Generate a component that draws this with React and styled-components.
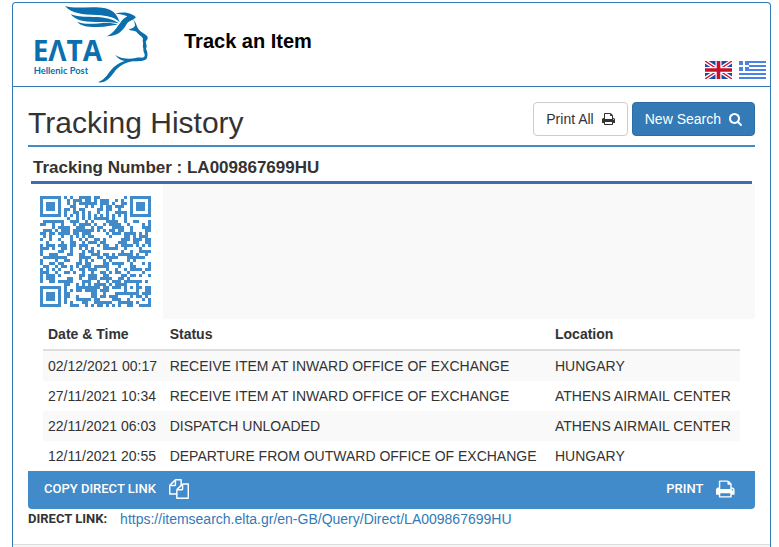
import styled, { createGlobalStyle } from 'styled-components';

const TRACKING_NUMBER = 'LA009867699HU';
const DIRECT_LINK = `https://itemsearch.elta.gr/en-GB/Query/Direct/${TRACKING_NUMBER}`;

const events = [
  {
    date: '02/12/2021 00:17',
    status: 'RECEIVE ITEM AT INWARD OFFICE OF EXCHANGE',
    location: 'HUNGARY',
  },
  {
    date: '27/11/2021 10:34',
    status: 'RECEIVE ITEM AT INWARD OFFICE OF EXCHANGE',
    location: 'ATHENS AIRMAIL CENTER',
  },
  {
    date: '22/11/2021 06:03',
    status: 'DISPATCH UNLOADED',
    location: 'ATHENS AIRMAIL CENTER',
  },
  {
    date: '12/11/2021 20:55',
    status: 'DEPARTURE FROM OUTWARD OFFICE OF EXCHANGE',
    location: 'HUNGARY',
  },
];

// QR version 5, error correction Q, mask 2
const QR_SIZE = 37;
const QR_BLOCKS = [15, 15, 16, 16];
const QR_EC_LENGTH = 18;
const QR_FORMAT = '011111100110001';

const gfMultiply = (x, y) => {
  let z = 0;
  for (let i = 7; i >= 0; i--) {
    z = (z << 1) ^ ((z >>> 7) * 0x11d);
    z ^= ((y >>> i) & 1) * x;
  }
  return z;
};

const makeDivisor = degree => {
  const result = Array(degree).fill(0);
  result[degree - 1] = 1;
  let root = 1;
  for (let i = 0; i < degree; i++) {
    for (let j = 0; j < degree; j++) {
      result[j] = gfMultiply(result[j], root);
      if (j + 1 < degree) result[j] ^= result[j + 1];
    }
    root = gfMultiply(root, 2);
  }
  return result;
};

const getRemainder = (data, divisor) => {
  const result = divisor.map(() => 0);
  data.forEach(byte => {
    const factor = byte ^ result.shift();
    result.push(0);
    divisor.forEach((value, i) => {
      result[i] ^= gfMultiply(value, factor);
    });
  });
  return result;
};

const toBits = (value, length) => value.toString(2).padStart(length, '0');

const getCodewordBits = text => {
  const total = QR_BLOCKS.reduce((a, b) => a + b, 0);
  let bits = '0100' + toBits(text.length, 8);
  [...text].forEach(char => {
    bits += toBits(char.charCodeAt(0), 8);
  });
  bits += '0000';
  const bytes = bits.match(/.{8}/g).map(byte => parseInt(byte, 2));
  for (let pad = 0xec; bytes.length < total; pad ^= 0xec ^ 0x11) {
    bytes.push(pad);
  }

  const divisor = makeDivisor(QR_EC_LENGTH);
  let start = 0;
  const blocks = QR_BLOCKS.map(length => {
    const block = bytes.slice(start, start + length);
    start += length;
    return block;
  });
  const ecBlocks = blocks.map(block => getRemainder(block, divisor));

  const result = [];
  for (let i = 0; i < 16; i++) {
    blocks.forEach(block => i < block.length && result.push(block[i]));
  }
  for (let i = 0; i < QR_EC_LENGTH; i++) {
    ecBlocks.forEach(block => result.push(block[i]));
  }
  return result.map(byte => toBits(byte, 8)).join('');
};

const getQrModules = text => {
  const grid = Array.from({ length: QR_SIZE }, () =>
    Array(QR_SIZE).fill(null)
  );
  const set = (x, y, dark) => {
    if (x >= 0 && y >= 0 && x < QR_SIZE && y < QR_SIZE) grid[y][x] = dark;
  };

  for (let i = 0; i < QR_SIZE; i++) {
    set(6, i, i % 2 === 0);
    set(i, 6, i % 2 === 0);
  }
  [
    [3, 3],
    [QR_SIZE - 4, 3],
    [3, QR_SIZE - 4],
  ].forEach(([cx, cy]) => {
    for (let dy = -4; dy <= 4; dy++) {
      for (let dx = -4; dx <= 4; dx++) {
        const distance = Math.max(Math.abs(dx), Math.abs(dy));
        set(cx + dx, cy + dy, distance !== 2 && distance !== 4);
      }
    }
  });
  for (let dy = -2; dy <= 2; dy++) {
    for (let dx = -2; dx <= 2; dx++) {
      set(30 + dx, 30 + dy, Math.max(Math.abs(dx), Math.abs(dy)) !== 1);
    }
  }

  const format = [...QR_FORMAT].reverse().map(bit => bit === '1');
  for (let i = 0; i < 6; i++) set(8, i, format[i]);
  set(8, 7, format[6]);
  set(8, 8, format[7]);
  set(7, 8, format[8]);
  for (let i = 9; i < 15; i++) set(14 - i, 8, format[i]);
  for (let i = 0; i < 8; i++) set(QR_SIZE - 1 - i, 8, format[i]);
  for (let i = 8; i < 15; i++) set(8, QR_SIZE - 15 + i, format[i]);
  set(8, QR_SIZE - 8, true);

  const bits = getCodewordBits(text);
  let index = 0;
  for (let right = QR_SIZE - 1; right >= 1; right -= 2) {
    if (right === 6) right = 5;
    for (let step = 0; step < QR_SIZE; step++) {
      const upward = ((right + 1) & 2) === 0;
      const y = upward ? QR_SIZE - 1 - step : step;
      for (let j = 0; j < 2; j++) {
        const x = right - j;
        if (grid[y][x] === null) {
          grid[y][x] = (bits[index] === '1') !== (x % 3 === 0);
          index++;
        }
      }
    }
  }
  return grid;
};

const QrCode = ({ value }) => {
  const path = getQrModules(value)
    .flatMap((row, y) => row.map((dark, x) => (dark ? `M${x} ${y}h1v1h-1z` : '')))
    .join('');

  return (
    <QrSvg
      viewBox={`0 0 ${QR_SIZE} ${QR_SIZE}`}
      shapeRendering="crispEdges"
      role="img"
      aria-label="QR code"
    >
      <path d={path} />
    </QrSvg>
  );
};

const PrintIcon = () => (
  <svg viewBox="0 0 1664 1792" aria-hidden="true">
    <path d="M384 1536h896v-256h-896v256zM384 896h896v-384h-160q-40 0-68-28t-28-68v-160h-640v640zM1536 960q0-26-19-45t-45-19-45 19-19 45 19 45 45 19 45-19 19-45zM1664 960v416q0 13-9.5 22.5t-22.5 9.5h-224v160q0 40-28 68t-68 28h-960q-40 0-68-28t-28-68v-160h-224q-13 0-22.5-9.5t-9.5-22.5v-416q0-79 56.5-135.5t135.5-56.5h64v-544q0-40 28-68t68-28h672q40 0 88 20t76 48l152 152q28 28 48 76t20 88v256h64q79 0 135.5 56.5t56.5 135.5z" />
  </svg>
);

const SearchIcon = () => (
  <svg viewBox="0 0 1664 1792" aria-hidden="true">
    <path d="M1152 832q0-185-131.5-316.5t-316.5-131.5-316.5 131.5-131.5 316.5 131.5 316.5 316.5 131.5 316.5-131.5 131.5-316.5zm512 832q0 52-38 90t-90 38q-54 0-90-38l-343-342q-179 124-399 124-143 0-273.5-55.5t-225-150-150-225-55.5-273.5 55.5-273.5 150-225 225-150 273.5-55.5 273.5 55.5 225 150 150 225 55.5 273.5q0 220-124 399l343 343q37 37 37 90z" />
  </svg>
);

const CopyIcon = () => (
  <svg viewBox="0 0 1792 1792" aria-hidden="true">
    <path d="M1696 384q40 0 68 28t28 68v1216q0 40-28 68t-68 28h-960q-40 0-68-28t-28-68v-288h-544q-40 0-68-28t-28-68v-672q0-40 20-88t48-76l408-408q28-28 76-48t88-20h416q40 0 68 28t28 68v328q68-40 128-40h416zm-544 213l-299 299h299v-299zm-640-384l-299 299h299v-299zm196 647l316-316v-416h-384v416q0 40-28 68t-68 28h-416v640h512v-256q0-40 20-88t48-76zm956 804v-1152h-384v416q0 40-28 68t-68 28h-416v640h896z" />
  </svg>
);

const Logo = () => (
  <LogoSvg viewBox="90 9 372 246" role="img" aria-label="ELTA Hellenic Post">
    <path d="M195 18C230 29 275 16 316 25C344 32 353 48 359 67C344 51 322 47 292 45C246 44 214 40 195 18Z" />
    <path d="M212 43C244 56 287 47 320 55C340 59 350 66 356 70C330 66 310 66 285 66C250 66 226 60 212 43Z" />
    <path d="M231 66C262 76 292 69 320 69C336 69 346 71 353 74C335 76 318 80 294 81C266 82 245 79 231 66Z" />
    <path d="M346 41C368 34 396 38 408 52L399 59C391 62 384 65 380 72C369 92 353 109 320 109C342 98 350 82 361 68C367 59 374 53 382 49C371 43 358 42 346 41Z" />
    <path d="M399 58C405 64 409 72 412 82C414 89 424 97 437 104C444 109 446 116 438 123C436 129 440 132 440 138C440 144 436 146 440 151C442 157 444 164 441 174C436 185 417 183 399 184C376 187 356 199 343 216C330 235 315 250 294 247C320 237 324 217 341 202C353 191 363 186 374 183C362 181 353 175 346 165C365 178 391 178 407 174C421 170 431 177 434 168C436 161 429 155 430 149C431 143 427 140 429 135C431 128 426 122 429 117C430 111 414 103 409 95C401 91 393 94 386 87C396 87 402 82 405 77C405 70 402 64 399 58Z" />
    <LogoName x="98" y="182">
      EΛTA
    </LogoName>
    <LogoCaption x="101" y="222">
      Hellenic Post
    </LogoCaption>
  </LogoSvg>
);

const BritishFlag = () => (
  <svg viewBox="0 0 27 18" aria-hidden="true">
    <path fill="#1c4aa5" d="M0 0h27v18H0z" />
    <path stroke="#fff" strokeWidth="4" d="M0 0l27 18M27 0L0 18" />
    <path stroke="#d2143a" strokeWidth="1.4" d="M0 0l27 18M27 0L0 18" />
    <path stroke="#fff" strokeWidth="6" d="M13.5 0v18M0 9h27" />
    <path stroke="#c8102e" strokeWidth="3.6" d="M13.5 0v18M0 9h27" />
  </svg>
);

const GreekFlag = () => (
  <svg viewBox="0 0 27 18" shapeRendering="crispEdges" aria-hidden="true">
    <path fill="#fff" d="M0 0h27v18H0z" />
    <path
      fill="#4b82e5"
      d="M0 0h27v2H0zM0 4h27v2H0zM0 8h27v2H0zM0 12h27v2H0zM0 16h27v2H0zM0 0h10v10H0z"
    />
    <path fill="#fff" d="M4 0h2v10H4zM0 4h10v2H0z" />
  </svg>
);

const App = () => {
  const copyLink = () => {
    navigator.clipboard?.writeText(DIRECT_LINK);
  };

  return (
    <Page>
      <GlobalStyle />
      <Panel>
        <Header>
          <Logo />
          <SiteTitle>Track an Item</SiteTitle>
          <Languages>
            <FlagLink href="#en" aria-label="English">
              <BritishFlag />
            </FlagLink>
            <FlagLink href="#el" aria-label="Ελληνικά">
              <GreekFlag />
            </FlagLink>
          </Languages>
        </Header>

        <Content>
          <HeadingRow>
            <Heading>Tracking History</Heading>
            <Actions>
              <Button onClick={() => window.print()}>
                Print All <PrintIcon />
              </Button>
              <Button $primary>
                New Search <SearchIcon />
              </Button>
            </Actions>
          </HeadingRow>

          <TrackingNumber>Tracking Number : {TRACKING_NUMBER}</TrackingNumber>

          <Summary>
            <QrCode value={DIRECT_LINK} />
            <SummaryFill />
          </Summary>

          <TableWrap>
            <Table>
              <thead>
                <tr>
                  <th>Date &amp; Time</th>
                  <th>Status</th>
                  <th>Location</th>
                </tr>
              </thead>
              <tbody>
                {events.map(event => (
                  <tr key={event.date}>
                    <td>{event.date}</td>
                    <td>{event.status}</td>
                    <td>{event.location}</td>
                  </tr>
                ))}
              </tbody>
            </Table>
          </TableWrap>

          <Toolbar>
            <ToolButton onClick={copyLink}>
              COPY DIRECT LINK <CopyIcon />
            </ToolButton>
            <ToolButton onClick={() => window.print()}>
              PRINT <PrintIcon />
            </ToolButton>
          </Toolbar>

          <LinkRow>
            <LinkLabel>DIRECT LINK:</LinkLabel>
            <a href={DIRECT_LINK}>{DIRECT_LINK}</a>
          </LinkRow>
        </Content>
        <Footer />
      </Panel>
    </Page>
  );
};

export default App;

const GlobalStyle = createGlobalStyle`
  * {
    box-sizing: border-box;
  }
  body {
    margin: 0;
    background: #fff;
    color: #333;
    font-family: 'Liberation Sans', Arial, sans-serif;
    font-size: 14px;
    line-height: 20px;
  }
  a {
    color: #337ab7;
    text-decoration: none;
  }
`;

const Page = styled.div`
  display: flex;
  flex-direction: column;
  min-height: 100vh;
  padding: 2px 8px 0 12px;
`;

const Panel = styled.div`
  display: flex;
  flex: 1;
  flex-direction: column;
  border: 1px solid #337ab7;
  border-bottom: 0;
  border-radius: 4px 4px 0 0;
`;

const Header = styled.header`
  display: flex;
  align-items: flex-start;
  padding: 0 4px 1px 17px;
  border-bottom: 1px solid #337ab7;
`;

const LogoSvg = styled.svg`
  width: 124px;
  height: 82px;
  fill: #0b6fae;
`;

const LogoName = styled.text`
  font-family: 'Open Sans', sans-serif;
  font-size: 84px;
  font-weight: 700;
`;

const LogoCaption = styled.text`
  font-family: Lato, sans-serif;
  font-size: 28px;
  font-weight: 700;
`;

const SiteTitle = styled.h1`
  flex: 1;
  margin: 26px 0 0 30px;
  color: #000;
  font-size: 20px;
  font-weight: 700;
  line-height: 24px;
`;

const Languages = styled.nav`
  display: flex;
  align-self: flex-end;
  gap: 7px;
  padding-bottom: 6px;
`;

const FlagLink = styled.a`
  display: flex;
  svg {
    width: 27px;
    height: 18px;
  }
`;

const Content = styled.main`
  padding: 15px 15px 15px;
`;

const HeadingRow = styled.div`
  display: flex;
  justify-content: space-between;
  align-items: flex-start;
  padding-bottom: 6px;
  border-bottom: 2px solid #428bca;
`;

const Heading = styled.h2`
  margin: 4px 0 0;
  font-size: 30px;
  font-weight: 400;
  line-height: 33px;
`;

const Actions = styled.div`
  display: flex;
  gap: 4px;
`;

const Button = styled.button`
  display: flex;
  align-items: center;
  gap: 8px;
  padding: 6px 12px;
  border: 1px solid ${props => (props.$primary ? '#2e6da4' : '#ccc')};
  border-radius: 4px;
  background: ${props => (props.$primary ? '#337ab7' : '#fff')};
  color: ${props => (props.$primary ? '#fff' : '#333')};
  font: inherit;
  cursor: pointer;
  svg {
    height: 14px;
    fill: currentColor;
  }
`;

const TrackingNumber = styled.h3`
  margin: 10px 3px 0;
  padding: 0 2px 2px;
  border-bottom: 3px solid #4169b4;
  font-size: 17px;
  font-weight: 700;
  line-height: 22px;
`;

const Summary = styled.div`
  display: flex;
`;

const QrSvg = styled.svg`
  width: 111px;
  height: 111px;
  margin: 12px;
  fill: #428bca;
`;

const SummaryFill = styled.div`
  flex: 1;
  background: #f9f9f9;
`;

const TableWrap = styled.div`
  padding: 0 15px;
`;

const Table = styled.table`
  width: 100%;
  border-collapse: collapse;
  th,
  td {
    padding: 5px;
    text-align: left;
  }
  th {
    border-bottom: 2px solid #ddd;
  }
  tbody tr:nth-child(odd) {
    background: #f9f9f9;
  }
`;

const Toolbar = styled.div`
  display: flex;
  justify-content: space-between;
  padding: 0 20px 0 16px;
  border-radius: 0 0 4px 4px;
  background: #428bca;
`;

const ToolButton = styled.button`
  display: flex;
  align-items: center;
  gap: 13px;
  height: 38px;
  padding: 0 0 3px;
  border: 0;
  background: none;
  color: #fff;
  font-family: Roboto, sans-serif;
  font-size: 13px;
  font-weight: 500;
  cursor: pointer;
  svg {
    height: 20px;
    fill: currentColor;
  }
`;

const LinkRow = styled.div`
  display: flex;
  gap: 13px;
`;

const LinkLabel = styled.span`
  font-family: Roboto, sans-serif;
  font-size: 13px;
  font-weight: 700;
`;

const Footer = styled.footer`
  flex: 1;
  border-top: 1px solid #ddd;
  background: #f5f5f5;
`;
